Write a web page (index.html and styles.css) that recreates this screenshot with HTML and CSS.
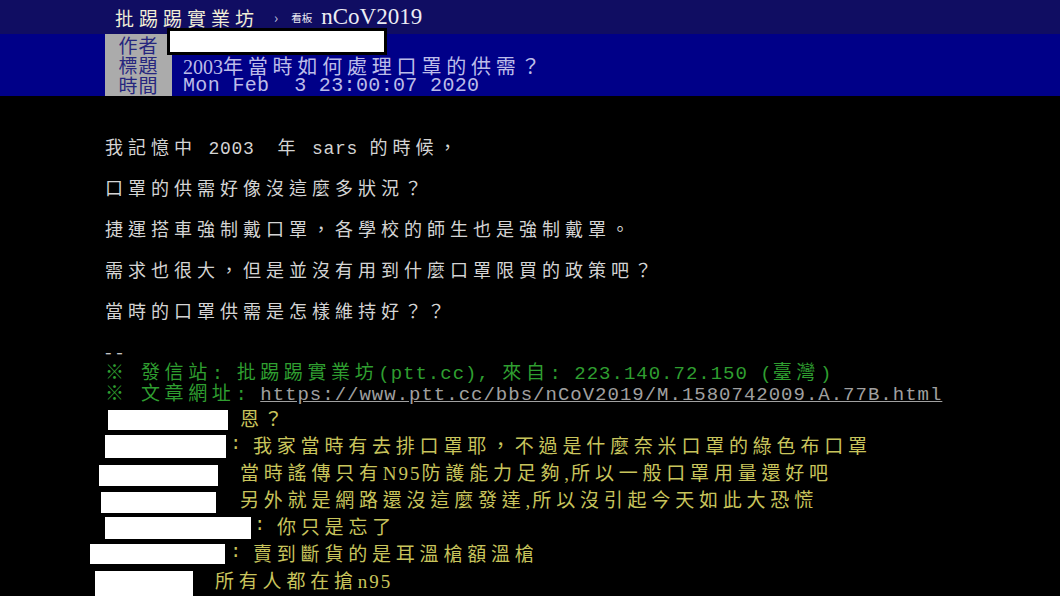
FILE: index.html
```html
<!DOCTYPE html>
<html lang="zh-Hant-TW">
<head>
    <meta charset="UTF-8">
    <meta name="viewport" content="width=device-width, initial-scale=1.0">
    <title>[問卦] 2003年當時如何處理口罩的供需？ - 看板 nCoV2019 - 批踢踢實業坊</title>
    <link rel="stylesheet" href="styles.css">
</head>
<body>
<div class="topbar">
    <span class="site">批踢踢實業坊</span>
    <span class="sep">›</span>
    <span class="board-label">看板</span>
    <span class="board">nCoV2019</span>
</div>

<div class="meta">
    <div class="labels">
        <div>作者</div>
        <div>標題</div>
        <div>時間</div>
    </div>
    <div class="values">
        <div class="author"></div>
        <div class="title"><span class="num">2003</span>年當時如何處理口罩的供需？</div>
        <div class="time">Mon Feb  3 23:00:07 2020</div>
    </div>
</div>

<div class="content">
    <div>我記憶中<span class="en"> 2003  </span>年<span class="en"> sars </span>的時候，</div>
    <div>口罩的供需好像沒這麼多狀況？</div>
    <div>捷運搭車強制戴口罩，各學校的師生也是強制戴罩。</div>
    <div>需求也很大，但是並沒有用到什麼口罩限買的政策吧？</div>
    <div>當時的口罩供需是怎樣維持好？？</div>
</div>

<div class="sig">
    <div class="dash">--</div>
    <div>※<span class="en"> </span>發信站<span class="en">: </span>批踢踢實業坊<span class="en">(ptt.cc), </span>來自<span class="en">: 223.140.72.150 (</span>臺灣<span class="en">)</span></div>
    <div>※<span class="en"> </span>文章網址<span class="en">: </span><a class="url en" href="#">https://www.ptt.cc/bbs/nCoV2019/M.1580742009.A.77B.html</a></div>
</div>

<div class="pushes">
    <div class="push p1"><span class="hide"></span><span>恩？</span></div>
    <div class="push p2"><span class="hide"></span><span class="en">: </span><span>我家當時有去排口罩耶，不過是什麼奈米口罩的綠色布口罩</span></div>
    <div class="push p3"><span class="hide"></span><span>當時謠傳只有<span class="lat">N95</span>防護能力足夠<span class="lat">,</span>所以一般口罩用量還好吧</span></div>
    <div class="push p4"><span class="hide"></span><span>另外就是網路還沒這麼發達<span class="lat">,</span>所以沒引起今天如此大恐慌</span></div>
    <div class="push p5"><span class="hide"></span><span class="en">: </span><span>你只是忘了</span></div>
    <div class="push p6"><span class="hide"></span><span class="en">: </span><span>賣到斷貨的是耳溫槍額溫槍</span></div>
    <div class="push p7"><span class="hide"></span><span>所有人都在搶<span class="lat">n95</span></span></div>
</div>
</body>
</html>
```

FILE: styles.css
```css
body {
    margin: 0;
    background-color: #000;
    color: #d0d0d0;
    font-family: "Noto Sans CJK TC", sans-serif;
    height: 596px;
    overflow: hidden;
}

.en {
    font-family: "Liberation Mono", "Noto Sans CJK TC", monospace;
    letter-spacing: 0.7px;
    white-space: pre;
}

/* top bar */
.topbar {
    height: 34px;
    background-color: #100d62;
    display: flex;
    align-items: center;
    padding-left: 115px;
}

.site {
    font-size: 19px;
    letter-spacing: 5px;
    color: #f0eed6;
}

.sep {
    font-size: 14px;
    color: #c8c8e0;
    margin: 0 13px 0 15px;
}

.board-label {
    font-size: 10.5px;
    color: #e8e8f0;
    margin-right: 9px;
}

.board {
    font-family: "Liberation Serif", serif;
    font-size: 23px;
    color: #ececf4;
}

/* article meta */
.meta {
    height: 62px;
    background-color: #000088;
    display: flex;
    padding-left: 105px;
}

.labels {
    width: 67px;
    background-color: #ababab;
    color: #26267e;
    font-size: 19px;
    line-height: 20px;
    letter-spacing: 1px;
    text-align: center;
    padding-top: 1px;
}

.values {
    display: flex;
    flex-direction: column;
    color: #bcbce8;
}

.author {
    width: 220px;
    height: 27px;
    box-sizing: border-box;
    margin: -6px 0 0 -5px;
    background-color: #fff;
    border: 3px solid #000;
}

.title {
    height: 21px;
    line-height: 21px;
    padding-left: 11px;
    font-size: 20px;
    letter-spacing: 4.8px;
}

.num {
    font-family: "Liberation Serif", serif;
    letter-spacing: 0;
}

.time {
    height: 20px;
    line-height: 20px;
    padding-left: 11px;
    font-family: "Liberation Mono", monospace;
    font-size: 20px;
    letter-spacing: 0.35px;
    white-space: pre;
}

/* body */
.content {
    margin-top: 30px;
    padding-left: 105px;
    font-size: 18px;
    line-height: 41px;
    letter-spacing: 5px;
    color: #d4d4d4;
}

.content > div {
    height: 41px;
}

.sig {
    margin-top: 10px;
    padding-left: 105px;
    font-size: 19px;
    line-height: 21px;
    letter-spacing: 4.6px;
    color: #2f9e30;
}

.sig > div {
    height: 21px;
    white-space: nowrap;
}

.sig .en {
    letter-spacing: 1px;
}

.sig .dash {
    height: 19px;
    line-height: 19px;
    color: #c4c4c4;
}

.url {
    color: #a0a0a0;
    text-decoration: underline;
}

/* pushes */
.pushes {
    margin-top: 2px;
    font-size: 19px;
    letter-spacing: 4.8px;
    color: #c8c45c;
}

.push {
    display: flex;
    align-items: flex-start;
    height: 27px;
    line-height: 27px;
    white-space: nowrap;
}

.push .en {
    letter-spacing: 0.1px;
}

.lat {
    font-family: "Liberation Serif", serif;
    letter-spacing: 2px;
}

.hide {
    flex: none;
    background-color: #fff;
}

.p1 .hide { margin: 6px 12px 0 108px; width: 120px; height: 20px; }
.p2 .hide { margin: 4px 4px 0 105px; width: 121px; height: 23px; }
.p3 .hide { margin: 7px 22px 0 99px; width: 119px; height: 21px; }
.p4 .hide { margin: 7px 24px 0 101px; width: 115px; height: 21px; }
.p5 .hide { margin: 5px 3px 0 105px; width: 146px; height: 22px; }
.p6 .hide { margin: 5px 5px 0 90px; width: 135px; height: 20px; }
.p7 .hide { margin: 5px 22px 0 95px; width: 98px; height: 30px; }
```
